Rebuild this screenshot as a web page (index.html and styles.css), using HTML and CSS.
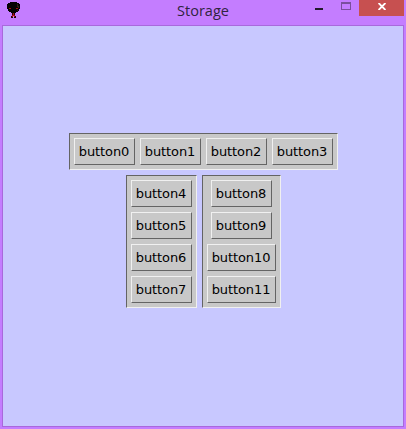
FILE: index.html
```html
<!DOCTYPE html>
<html lang="en">
<head>
<meta charset="utf-8">
<title>Storage</title>
<link rel="stylesheet" href="styles.css">
</head>
<body>
<div class="window">
  <header class="titlebar">
    <svg class="app-icon" width="14" height="17" viewBox="0 0 14 17" shape-rendering="crispEdges">
      <path fill="#050203" d="M3 0h7v1h2v1h1v5h-1v2h-1v1H9v1H4v-1H2V9H1V7H0V2h1V1h2z"/>
      <path fill="#1c0508" d="M5 11h3v3h1v2H7v-2H6v2H4v-2h1z"/>
      <path fill="#a80c12" d="M2 6h2v1H2zM9 6h2v1H9zM6 11h1v3H6zM5 13h1v2H5zM7 13h1v2H7z"/>
      <path fill="#302018" d="M10 2h1v3h-1zM11 4h1v2h-1zM10 8h1v1h-1z"/>
    </svg>
    <h1 class="title">Storage</h1>
    <div class="controls">
      <span class="control minimize"><i></i></span>
      <span class="control maximize"><i></i></span>
      <span class="control close">
        <svg width="8" height="7" viewBox="0 0 8 7"><path d="M.6 0l6.8 7M7.4 0L.6 7" stroke="#fff" stroke-width="1.8"/></svg>
      </span>
    </div>
  </header>
  <main class="client">
    <div class="panel row">
      <button>button0</button><button>button1</button><button>button2</button><button>button3</button>
    </div>
    <div class="columns">
      <div class="panel column">
        <button>button4</button><button>button5</button><button>button6</button><button>button7</button>
      </div>
      <div class="panel column">
        <button>button8</button><button>button9</button><button class="wide">button10</button><button class="wide">button11</button>
      </div>
    </div>
  </main>
</div>
</body>
</html>
```
FILE: styles.css
```css
* { box-sizing: border-box; }
body { margin: 0; }
.window {
  width: 406px;
  height: 429px;
  padding: 0 2px 2px;
  background: #c47dff;
}
.titlebar {
  display: grid;
  grid-template-columns: 110px 1fr 110px;
  align-items: start;
  height: 25px;
  padding-left: 5px;
}
.app-icon { display: block; margin-top: 2px; }
.title {
  margin: 0;
  padding-right: 5px;
  font: 400 14.5px/21px "Open Sans", sans-serif;
  text-align: center;
  color: #302440;
}
.controls { display: flex; justify-content: flex-end; }
.control { display: flex; justify-content: center; height: 16px; }
.minimize { width: 27px; }
.minimize i { width: 8px; height: 2px; margin-top: 8px; background: #231a2c; }
.maximize { width: 27px; }
.maximize i {
  width: 10px;
  height: 8px;
  margin-top: 2px;
  border: 1px solid #7a4f9d;
  border-top-width: 2px;
}
.close { width: 45px; align-items: center; padding-bottom: 3px; background: #c75050; }
.client {
  display: flex;
  flex-direction: column;
  align-items: center;
  gap: 5px;
  width: 402px;
  height: 402px;
  padding-top: 107px;
  border: 1px solid #a969dc;
  background: #c8c8ff;
}
.panel {
  display: flex;
  gap: 5px;
  padding: 4px;
  background: #c8c8c8;
  border: 1px solid;
  border-color: #646464 #f0f0f0 #f0f0f0 #646464;
}
.columns { display: flex; gap: 5px; }
.column { flex-direction: column; align-items: center; }
button {
  width: 61px;
  height: 27px;
  padding: 0;
  border: 1px solid;
  border-color: #f0f0f0 #646464 #646464 #f0f0f0;
  border-radius: 0;
  background: #c8c8c8;
  color: #000;
  font: 13px/25px "DejaVu Sans", sans-serif;
  letter-spacing: -0.1px;
  white-space: nowrap;
}
.wide { width: 69px; }
```
